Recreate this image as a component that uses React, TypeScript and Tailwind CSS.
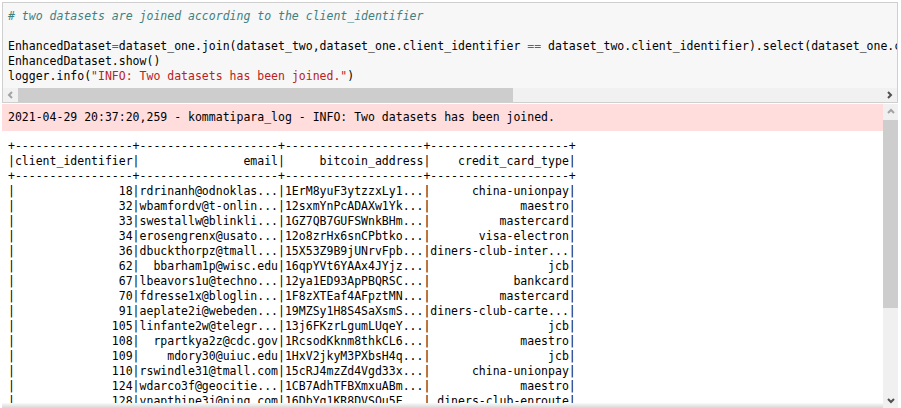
import React from 'react';

type Row = [number, string, string, string];

const rows: Row[] = [
  [18, 'rdrinanh@odnoklas...', '1ErM8yuF3ytzzxLy1...', 'china-unionpay'],
  [32, 'wbamfordv@t-onlin...', '12sxmYnPcADAXw1Yk...', 'maestro'],
  [33, 'swestallw@blinkli...', '1GZ7QB7GUFSWnkBHm...', 'mastercard'],
  [34, 'erosengrenx@usato...', '12o8zrHx6snCPbtko...', 'visa-electron'],
  [36, 'dbuckthorpz@tmall...', '15X53Z9B9jUNrvFpb...', 'diners-club-inter...'],
  [62, 'bbarham1p@wisc.edu', '16qpYVt6YAAx4JYjz...', 'jcb'],
  [67, 'lbeavors1u@techno...', '12ya1ED93ApPBQRSC...', 'bankcard'],
  [70, 'fdresse1x@bloglin...', '1F8zXTEaf4AFpztMN...', 'mastercard'],
  [91, 'aeplate2i@webeden...', '19MZSy1H8S4SaXsmS...', 'diners-club-carte...'],
  [105, 'linfante2w@telegr...', '13j6FKzrLgumLUqeY...', 'jcb'],
  [108, 'rpartkya2z@cdc.gov', '1RcsodKknm8thkCL6...', 'maestro'],
  [109, 'mdory30@uiuc.edu', '1HxV2jkyM3PXbsH4q...', 'jcb'],
  [110, 'rswindle31@tmall.com', '15cRJ4mzZd4Vgd33x...', 'china-unionpay'],
  [124, 'wdarco3f@geocitie...', '1CB7AdhTFBXmxuABm...', 'maestro'],
  [128, 'vnapthine3j@ning.com', '16DbYq1KR8DVSQu5E...', 'diners-club-enroute'],
];

const widths = [17, 20, 20, 20];
const sep = '+' + widths.map((w) => '-'.repeat(w)).join('+') + '+';
const line = (cells: string[]) =>
  '|' + cells.map((c, i) => c.padStart(widths[i], ' ')).join('|') + '|';

const table = [
  sep,
  line(['client_identifier', 'email', 'bitcoin_address', 'credit_card_type']),
  sep,
  ...rows.map((r) => line([String(r[0]), r[1], r[2], r[3]])),
].join('\n');

function Chevron({ dir, color }: { dir: 'left' | 'right' | 'up' | 'down'; color: string }) {
  const pts = {
    left: '5,1 2,4 5,7',
    right: '2,1 5,4 2,7',
    up: '1,5 4,2 7,5',
    down: '1,3 4,6 7,3',
  }[dir];
  return (
    <svg width="8" height="8" viewBox="0 0 8 8">
      <polyline points={pts} fill="none" stroke={color} strokeWidth="2" />
    </svg>
  );
}

export default function App() {
  return (
    <div className="w-[901px] h-[408px] bg-white overflow-hidden font-['DejaVu_Sans_Mono',monospace] text-[11.5px] leading-[15px] text-black">
      {/* input cell */}
      <div className="ml-[2px] mt-[2px] w-[896px] border border-[#cfcfcf] bg-[#f7f7f7]">
        <pre className="pl-[5px] pt-[6px] pb-[4px] overflow-hidden whitespace-pre font-['DejaVu_Sans_Mono',monospace]">
          <span className="italic text-[#408080]"># two datasets are joined according to the client_identifier</span>
          {'\n\n'}
          EnhancedDataset<span className="text-[#aa22ff]">=</span>dataset_one.join(dataset_two,dataset_one.client_identifier{' '}
          <span className="text-[#aa22ff]">==</span> dataset_two.client_identifier).select(dataset_one.client_identifier,dataset_one.email,dataset_two.bitcoin_address,dataset_two.credit_card_type)
          {'\n'}EnhancedDataset.show(){'\n'}logger.info(
          <span className="text-[#ba2121]">"INFO: Two datasets has been joined."</span>)
        </pre>
        <div className="flex h-[14px] bg-[#f1f1f1]">
          <div className="w-[15px] flex items-center justify-center">
            <Chevron dir="left" color="#a3a3a3" />
          </div>
          <div className="w-[495px] bg-[#cdcdcd]" />
          <div className="flex-1" />
          <div className="w-[15px] flex items-center justify-center">
            <Chevron dir="right" color="#505050" />
          </div>
        </div>
      </div>

      {/* output area */}
      <div className="ml-[2px] mt-[1px] w-[896px] h-[304px] flex">
        <div className="flex-1 flex flex-col overflow-hidden">
          <pre className="bg-[#ffdddd] px-[6px] py-[6px] whitespace-pre font-['DejaVu_Sans_Mono',monospace]">
            2021-04-29 20:37:20,259 - kommatipara_log - INFO: Two datasets has been joined.
          </pre>
          <pre className="flex-1 overflow-hidden px-[6px] pt-[8px] whitespace-pre font-['DejaVu_Sans_Mono',monospace]">
            {table}
          </pre>
          <div className="h-[5px] bg-gradient-to-b from-[#fafafa] to-[#d6d6d6]" />
        </div>
        <div className="w-[15px] flex flex-col bg-[#f0f0f0]">
          <div className="h-[16px] flex items-center justify-center">
            <Chevron dir="up" color="#a3a3a3" />
          </div>
          <div className="h-[188px] bg-[#cdcdcd]" />
          <div className="flex-1" />
          <div className="h-[16px] flex items-center justify-center">
            <Chevron dir="down" color="#505050" />
          </div>
        </div>
      </div>
    </div>
  );
}
